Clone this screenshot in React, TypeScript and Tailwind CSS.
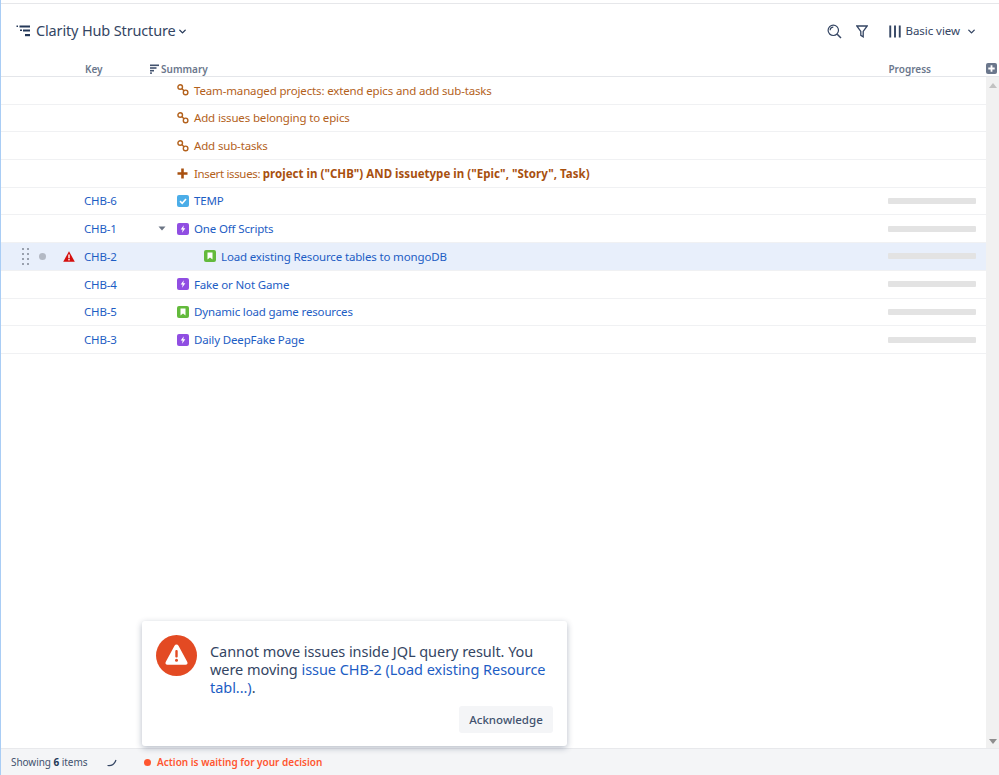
import { ReactNode } from 'react';
import { ChevronDown } from 'lucide-react';

const font = 'font-["Noto_Sans","Open_Sans",sans-serif]';

function LinkIcon() {
  return (
    <svg width="12" height="12" viewBox="0 0 12 12" fill="none" stroke="#b3611b" strokeWidth="1.4">
      <circle cx="3.2" cy="3" r="2.3" />
      <circle cx="8.6" cy="8.4" r="2.3" />
      <path d="M4.8 4.6 L7 6.8" />
    </svg>
  );
}

function PlusIcon() {
  return (
    <svg width="11" height="11" viewBox="0 0 11 11" fill="#a8500f">
      <path d="M4.2 0.5h2.6v3.7h3.7v2.6H6.8v3.7H4.2V6.8H0.5V4.2h3.7z" />
    </svg>
  );
}

function TypeIcon({ type }: { type: 'task' | 'epic' | 'story' }) {
  if (type === 'task') {
    return (
      <svg width="12" height="12" viewBox="0 0 12 12">
        <rect width="12" height="12" rx="2" fill="#4bade8" />
        <path d="M3 6.2 L5.2 8.3 L9 3.9" fill="none" stroke="#fff" strokeWidth="1.6" />
      </svg>
    );
  }
  if (type === 'epic') {
    return (
      <svg width="12" height="12" viewBox="0 0 12 12">
        <rect width="12" height="12" rx="2" fill="#904ee2" />
        <path d="M6.8 2.2 L3.7 6.6 H5.6 L5.1 9.8 L8.3 5.3 H6.3 Z" fill="#fff" />
      </svg>
    );
  }
  return (
    <svg width="12" height="12" viewBox="0 0 12 12">
      <rect width="12" height="12" rx="2" fill="#63ba3c" />
      <path d="M3.5 2.6 H8.5 V9.6 L6 7.6 L3.5 9.6 Z" fill="#fff" />
    </svg>
  );
}

function GeneratorRow({ icon, children }: { icon: ReactNode; children: ReactNode }) {
  return (
    <div className="flex h-[27.7px] items-center border-b border-[#f0f1f3] pl-[176px] text-[11.5px] tracking-[-0.15px] text-[#b3611b]">
      <span className="flex w-[17px] shrink-0">{icon}</span>
      <span>{children}</span>
    </div>
  );
}

function IssueRow({
  id,
  summary,
  type,
  selected,
  expanded,
  nested,
}: {
  id: string;
  summary: string;
  type: 'task' | 'epic' | 'story';
  selected?: boolean;
  expanded?: boolean;
  nested?: boolean;
}) {
  return (
    <div
      className={`flex h-[27.7px] items-center border-b border-[#f0f1f3] text-[11.5px] tracking-[-0.15px] text-[#1d5dc4] ${
        selected ? 'bg-[#e8effb]' : ''
      }`}
    >
      <div className="flex w-[83px] shrink-0 items-center">
        {selected && (
          <>
            <div className="ml-[21px] grid grid-cols-2 gap-x-[3px] gap-y-[3px]">
              {[0, 1, 2, 3, 4, 5, 6, 7].map((n) => (
                <span key={n} className="h-[2px] w-[2px] bg-[#9aa1ae]" />
              ))}
            </div>
            <span className="ml-[10px] h-[7px] w-[7px] rounded-full bg-[#b3b9c4]" />
            <svg className="ml-[17px]" width="12" height="11" viewBox="0 0 12 11">
              <path d="M6 0.3 L11.8 10.7 H0.2 Z" fill="#d40e0d" />
              <rect x="5.3" y="3.5" width="1.4" height="3.8" fill="#fff" />
              <rect x="5.3" y="8" width="1.4" height="1.4" fill="#fff" />
            </svg>
          </>
        )}
      </div>
      <div className="w-[74px] shrink-0">{id}</div>
      <div className="flex w-[19px] shrink-0">
        {expanded && (
          <svg width="8" height="5" viewBox="0 0 8 5">
            <path d="M0.5 0.5 H7.5 L4 4.5 Z" fill="#6b7484" />
          </svg>
        )}
      </div>
      <div className={`flex flex-1 items-center ${nested ? 'pl-[27px]' : ''}`}>
        <span className="flex w-[17px] shrink-0">
          <TypeIcon type={type} />
        </span>
        <span>{summary}</span>
      </div>
      <div className="mr-[10px] h-[6px] w-[88px] shrink-0 rounded-[1px] bg-[#e3e3e3]" />
    </div>
  );
}

export default function App() {
  return (
    <div className={`relative flex h-[775px] w-[999px] flex-col overflow-hidden border-l border-[#a9cdf5] bg-white ${font}`}>
      <div className="mt-[3px] h-px shrink-0 bg-[#e6e7ea]" />

      {/* toolbar */}
      <div className="flex h-[57px] shrink-0 items-center pb-[3px] text-[#344563]">
        <svg className="ml-[15px]" width="15" height="12" viewBox="0 0 15 12" fill="#253858">
          <rect x="0.5" y="0.5" width="1.5" height="1.5" />
          <rect x="3.5" y="0.5" width="10.5" height="2" />
          <rect x="4" y="4.5" width="2" height="1.5" />
          <rect x="7" y="4.5" width="7" height="2" />
          <rect x="9" y="9" width="5" height="2.2" />
        </svg>
        <span className="ml-[5px] text-[14.5px] tracking-[-0.15px] text-[#344563]">Clarity Hub Structure</span>
        <ChevronDown className="ml-px" size={11} strokeWidth={3} color="#253858" />
        <div className="ml-auto flex items-center">
          <svg width="15" height="15" viewBox="0 0 15 15" fill="none" stroke="#344563" strokeWidth="1.2">
            <circle cx="6.3" cy="6.3" r="5.2" />
            <path d="M3.2 6.3 A3.1 3.1 0 0 1 6.3 3.2" />
            <path d="M10.2 10.2 L14 14" strokeWidth="1.5" />
          </svg>
          <svg className="ml-[14px]" width="12" height="13" viewBox="0 0 12 13" fill="none" stroke="#344563" strokeWidth="1.3">
            <path d="M0.8 1 H11.2 L7.2 6.4 V11.8 L4.8 10.4 V6.4 Z" />
          </svg>
          <svg className="ml-[21px]" width="12" height="13" viewBox="0 0 12 13" fill="#344563">
            <rect x="0.3" y="0.5" width="1.9" height="12" />
            <rect x="5.05" y="0.5" width="1.9" height="12" />
            <rect x="9.8" y="0.5" width="1.9" height="12" />
          </svg>
          <span className="ml-[4px] text-[11.5px] tracking-[-0.05px] text-[#344563]">Basic view</span>
          <ChevronDown className="ml-[6px] mr-[22px]" size={11} strokeWidth={3} color="#344563" />
        </div>
      </div>

      {/* column headers */}
      <div className="flex h-[16px] shrink-0 items-center border-b border-[#e4e6ea] pt-[2px] text-[10px] font-semibold text-[#6b778c]">
        <span className="ml-[84px] w-[65px]">Key</span>
        <svg className="-mt-[2px]" width="10" height="10" viewBox="0 0 10 10" fill="#42526e">
          <rect x="0" y="0.5" width="9" height="1.6" />
          <rect x="0" y="3.2" width="6.5" height="1.6" />
          <rect x="0" y="5.9" width="4" height="1.6" />
          <rect x="0" y="8.4" width="2" height="1.4" />
        </svg>
        <span className="ml-px">Summary</span>
        <span className="ml-auto mr-[55px]">Progress</span>
        <span className="-mt-[2px] mr-[2px] flex h-[11px] w-[11px] items-center justify-center rounded-[2px] bg-[#6b778c]">
          <svg width="7" height="7" viewBox="0 0 7 7" fill="#fff">
            <path d="M2.6 0.3h1.8v2.3h2.3v1.8H4.4v2.3H2.6V4.4H0.3V2.6h2.3z" />
          </svg>
        </span>
      </div>

      {/* rows + scrollbar */}
      <div className="flex min-h-0 flex-1">
        <div className="min-w-0 flex-1">
          <GeneratorRow icon={<LinkIcon />}>Team-managed projects: extend epics and add sub-tasks</GeneratorRow>
          <GeneratorRow icon={<LinkIcon />}>Add issues belonging to epics</GeneratorRow>
          <GeneratorRow icon={<LinkIcon />}>Add sub-tasks</GeneratorRow>
          <GeneratorRow icon={<PlusIcon />}>
            <span className="tracking-[-0.35px]">Insert issues: </span>
            <b className="font-bold tracking-[0.02px] text-[#a8500f]">project in ("CHB") AND issuetype in ("Epic", "Story", Task)</b>
          </GeneratorRow>
          <IssueRow id="CHB-6" summary="TEMP" type="task" />
          <IssueRow id="CHB-1" summary="One Off Scripts" type="epic" expanded />
          <IssueRow id="CHB-2" summary="Load existing Resource tables to mongoDB" type="story" selected nested />
          <IssueRow id="CHB-4" summary="Fake or Not Game" type="epic" />
          <IssueRow id="CHB-5" summary="Dynamic load game resources" type="story" />
          <IssueRow id="CHB-3" summary="Daily DeepFake Page" type="epic" />
        </div>
        <div className="flex w-[13px] shrink-0 flex-col items-center justify-between bg-[#f1f1f1] pb-[4px] pt-[6px]">
          <svg width="8" height="5" viewBox="0 0 8 5"><path d="M4 0 L8 5 H0 Z" fill="#c2c2c2" /></svg>
          <svg width="8" height="5" viewBox="0 0 8 5"><path d="M0 0 H8 L4 5 Z" fill="#8e8e8e" /></svg>
        </div>
      </div>

      {/* footer */}
      <div className="flex h-[27px] shrink-0 items-center border-t border-[#e8e9ec] bg-[#f4f5f7] pt-px text-[10px] text-[#42526e]">
        <span className="ml-[10px] w-[96px] tracking-[-0.05px]">
          Showing <b className="font-bold text-[#253858]">6</b> items
        </span>
        <svg width="10" height="8" viewBox="0 0 10 8" fill="none" stroke="#344563" strokeWidth="1.2">
          <path d="M0.5 6.5 C4 7 7.5 5.5 9 1" />
        </svg>
        <span className="ml-[27px] h-[7px] w-[7px] rounded-full bg-[#ff5630]" />
        <span className="ml-[6px] font-semibold text-[#ff5630]">Action is waiting for your decision</span>
      </div>

      {/* flag */}
      <div className="absolute left-[141px] top-[621px] h-[125px] w-[425px] rounded-[3px] bg-white shadow-[0_2px_6px_rgba(9,30,66,0.3)]">
        <div className="flex pl-[14px] pt-[14px]">
          <svg className="shrink-0" width="41" height="41" viewBox="0 0 41 41">
            <circle cx="20.5" cy="20.5" r="20.5" fill="#e34a23" />
            <path d="M20.5 9.5 Q21.8 9.5 22.5 10.8 L31.3 27 Q32.2 29.5 29.5 29.8 H11.5 Q8.8 29.5 9.7 27 L18.5 10.8 Q19.2 9.5 20.5 9.5 Z" fill="#fff" />
            <rect x="19.3" y="15" width="2.4" height="7.5" rx="1" fill="#e34a23" />
            <circle cx="20.5" cy="25.3" r="1.5" fill="#e34a23" />
          </svg>
          <p className="ml-[13px] mt-[7px] w-[345px] text-[14.5px] leading-[18px] tracking-[-0.05px] text-[#344563]">
            Cannot move issues inside JQL query result. You were moving{' '}
            <span className="text-[#1d5dc4]">issue CHB-2 (Load existing Resource tabl...)</span>.
          </p>
        </div>
        <div className="absolute bottom-[13px] right-[14px] flex h-[27px] w-[94px] items-center justify-center rounded-[3px] bg-[#f4f5f7] text-[11.5px] font-medium text-[#42526e]">
          Acknowledge
        </div>
      </div>
    </div>
  );
}
